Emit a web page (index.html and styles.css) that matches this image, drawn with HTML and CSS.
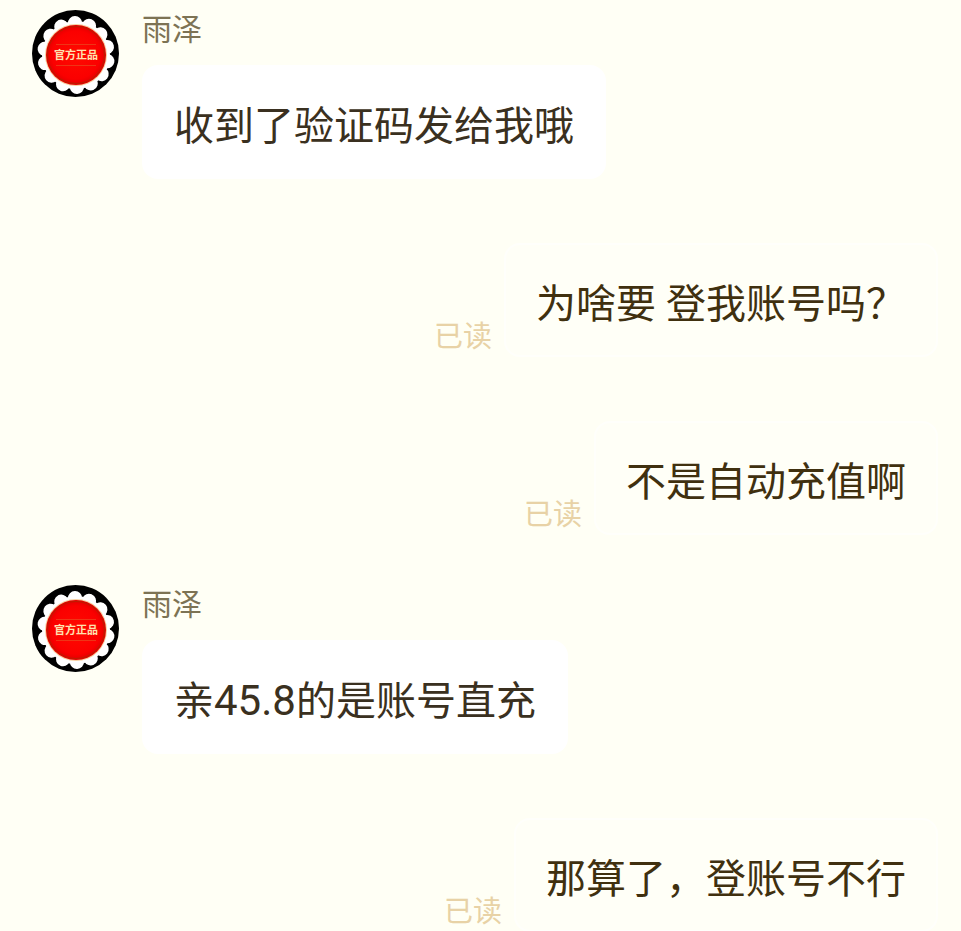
FILE: index.html
```html
<!DOCTYPE html>
<html lang="zh-CN">
<head>
    <meta charset="UTF-8">
    <meta name="viewport" content="width=device-width, initial-scale=1.0">
    <title>雨泽</title>
    <link rel="stylesheet" href="styles.css">
</head>
<body>
    <main class="chat">
        <div class="message received">
            <svg class="avatar" viewBox="0 0 87 87" role="img" aria-label="官方正品">
                <defs>
                    <radialGradient id="seal">
                        <stop offset="0" stop-color="#ff0a00"/>
                        <stop offset="0.8" stop-color="#fb0000"/>
                        <stop offset="1" stop-color="#e00000"/>
                    </radialGradient>
                    <g id="badge">
                        <circle cx="43.5" cy="43.5" r="43.5" fill="#000"/>
                        <circle cx="44" cy="45" r="34" fill="#fff"/>
                        <!-- round dots along the edge make the scallops -->
                        <circle cx="44" cy="45" r="32" transform="rotate(11 44 45)" fill="none" stroke="#fff" stroke-width="14" stroke-linecap="round" pathLength="140" stroke-dasharray="0.1 9.9"/>
                        <circle cx="44" cy="45" r="31" fill="#f8d0a0"/>
                        <circle cx="44" cy="45" r="30" fill="url(#seal)"/>
                        <circle cx="44" cy="45" r="28.5" fill="none" stroke="#b82000" stroke-width="1"/>
                        <path d="M24 34.500H64M24 55.500H64" stroke="#e84a20" stroke-width="0.700"/>
                        <text class="badge-text" x="44" y="49" text-anchor="middle">官方正品</text>
                    </g>
                </defs>
                <use href="#badge"/>
            </svg>
            <div class="content">
                <div class="name">雨泽</div>
                <div class="bubble">收到了验证码发给我哦</div>
            </div>
        </div>

        <div class="message sent">
            <span class="status">已读</span>
            <div class="bubble">为啥要 登我账号吗？</div>
        </div>

        <div class="message sent">
            <span class="status">已读</span>
            <div class="bubble">不是自动充值啊</div>
        </div>

        <div class="message received">
            <svg class="avatar" viewBox="0 0 87 87" role="img" aria-label="官方正品">
                <use href="#badge"/>
            </svg>
            <div class="content">
                <div class="name">雨泽</div>
                <div class="bubble">亲<span class="number">45.8</span>的是账号直充</div>
            </div>
        </div>

        <div class="message sent">
            <span class="status">已读</span>
            <div class="bubble">那算了，登账号不行</div>
        </div>
    </main>
</body>
</html>
```

FILE: styles.css
```css
body {
    margin: 0;
    background-color: #fffff5;
    font-family: Roboto, "Noto Sans CJK SC", sans-serif;
}
.chat {
    display: flex;
    flex-direction: column;
    gap: 50px;
    padding: 10px 23px 0 32px;
}
.message {
    display: flex;
}
.received {
    align-items: flex-start;
    gap: 23px;
}
.sent {
    justify-content: flex-end;
    align-items: flex-end;
    gap: 12px;
    padding-top: 14px;
}
.avatar {
    width: 87px;
    height: 87px;
    flex-shrink: 0;
}
.badge-text {
    font-size: 11px;
    font-weight: bold;
    fill: #ffe2b0;
}
.content {
    display: flex;
    flex-direction: column;
    align-items: flex-start;
    gap: 15px;
}
.name {
    font-size: 30px;
    line-height: 40px;
    color: #7d7354;
}
.bubble {
    padding: 37px 32px 27px;
    border-radius: 16px;
    background-color: #fff;
    font-size: 40px;
    line-height: 50px;
    color: #3a3020;
}
.number {
    font-size: 42px;
    line-height: 40px;
}
.sent .bubble {
    background-color: #fffff7;
    box-shadow: inset 0 0 0 2px #fffffb;
    color: #40300f;
}
.status {
    font-size: 29px;
    line-height: 40px;
    white-space: nowrap;
    color: #e8d2a6;
}
```
